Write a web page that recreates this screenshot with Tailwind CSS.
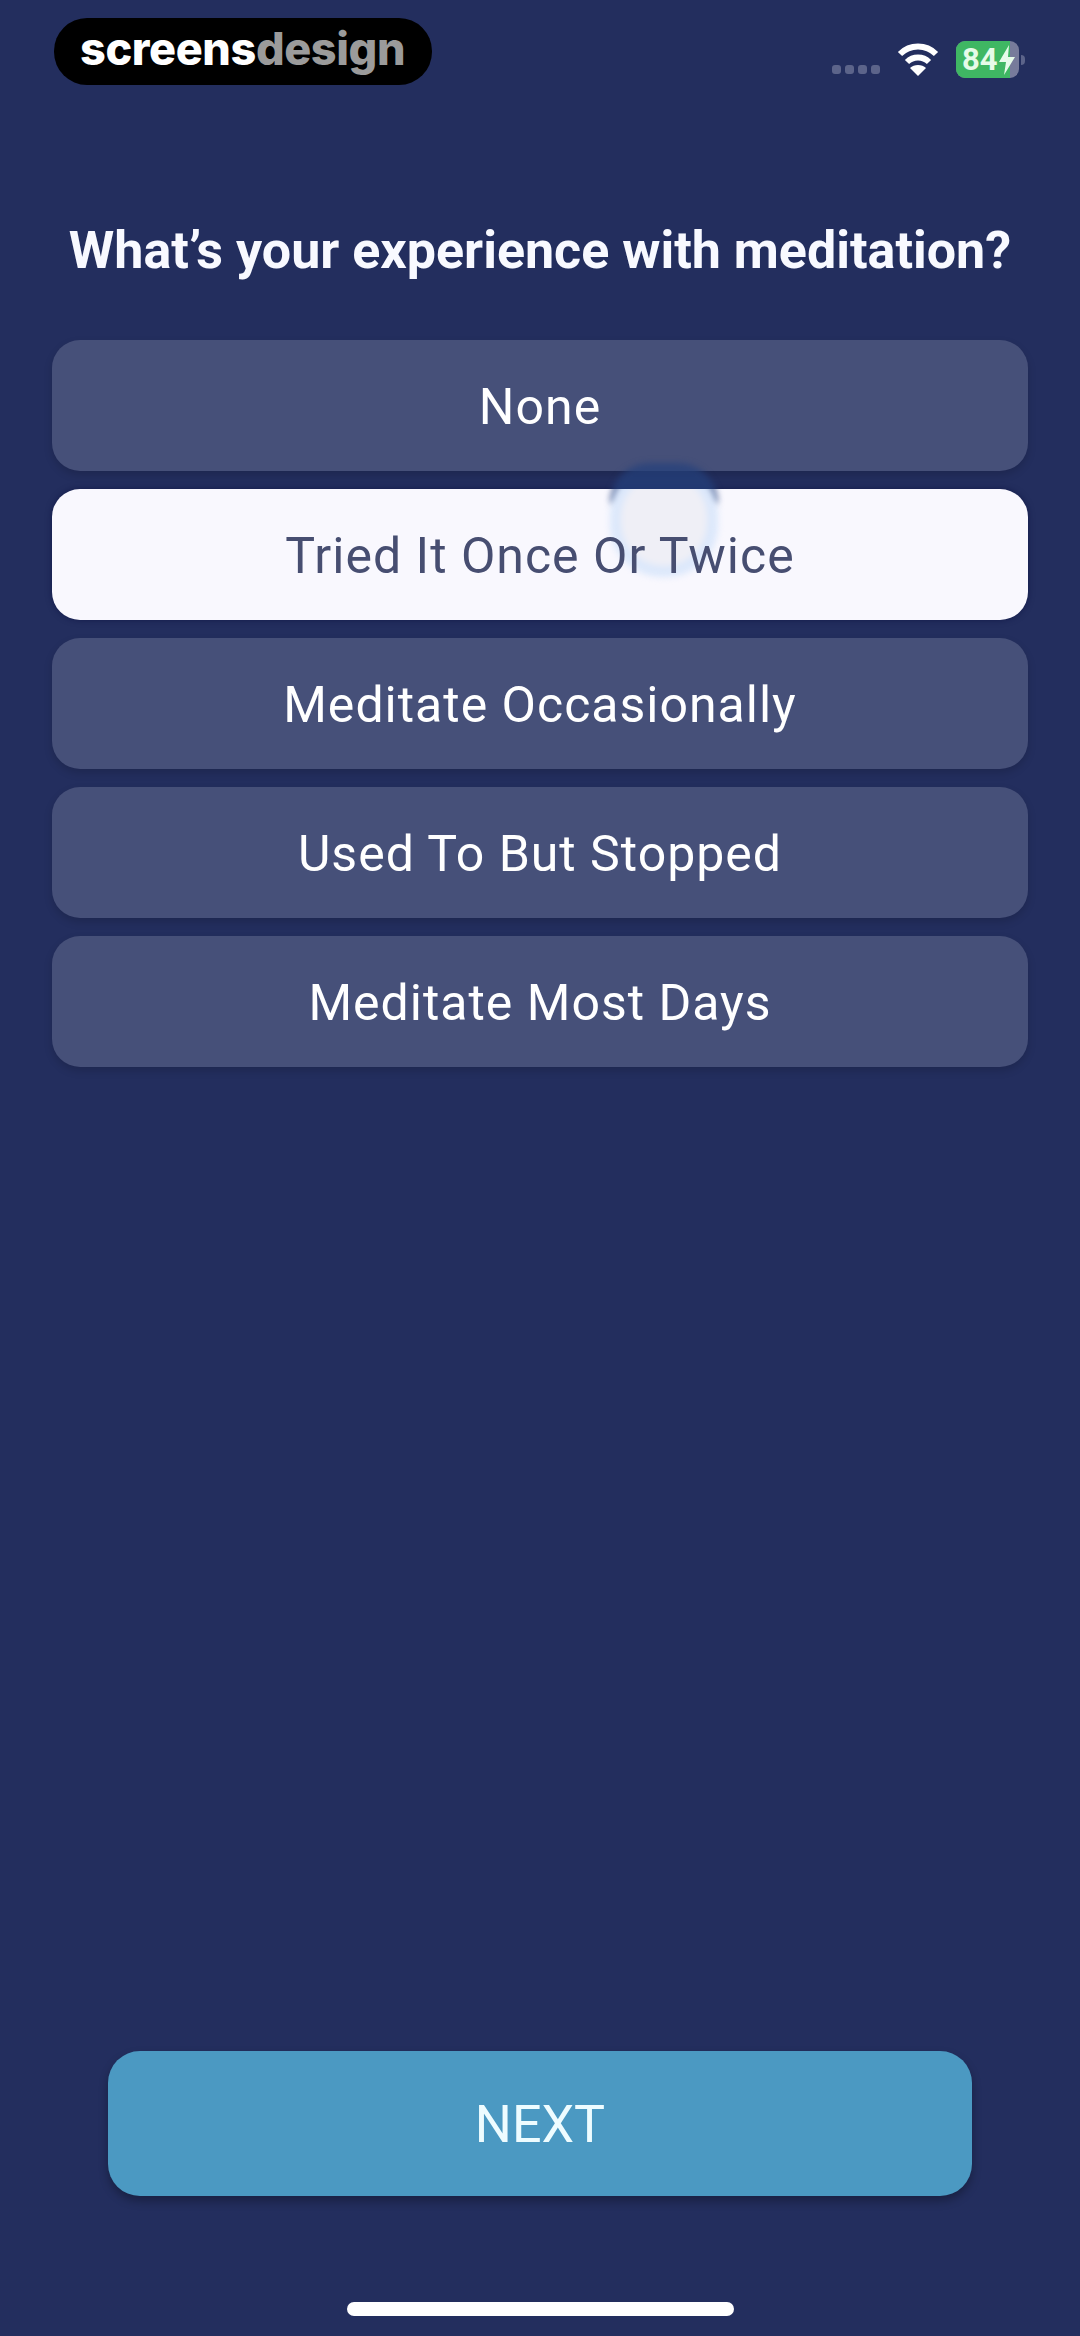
<!DOCTYPE html>
<html><head><meta charset="utf-8"><script src="https://cdn.jsdelivr.net/npm/@tailwindcss/browser@4"></script></head>
<body class="m-0">
<div class="w-[1080px] h-[2336px] bg-[#232e5e] flex flex-col overflow-hidden font-['Roboto',sans-serif]">
  <div class="h-[85px] mt-[18px] pl-[54px] pr-[55px] flex items-start justify-between shrink-0">
    <div class="w-[378px] h-[67px] bg-black rounded-[33px] flex items-center pl-[26px] font-['Inter',sans-serif] font-extrabold text-[45px] leading-none tracking-[-0.4px] pb-[7px]">
      <span class="text-white">screens</span><span class="text-[#9b9b9b]">design</span>
    </div>
    <div class="flex items-center mt-[23px] h-[37px] relative">
      <div class="flex gap-[4px] mt-[20px] mr-[17px]">
        <span class="w-[9px] h-[9px] rounded-[3px] bg-[#5c648a]"></span><span class="w-[9px] h-[9px] rounded-[3px] bg-[#5c648a]"></span><span class="w-[9px] h-[9px] rounded-[3px] bg-[#5c648a]"></span><span class="w-[9px] h-[9px] rounded-[3px] bg-[#5c648a]"></span>
      </div>
      <svg width="42" height="33" viewBox="0 0 42 33" class="mr-[17px]" fill="none" stroke="#fff" stroke-width="6"><path d="M3 11C13 1 29 1 39 11"/><path d="M10 19C16 13 26 13 32 19"/><path d="M13 25L21 33L29 25C25 21 17 21 13 25Z" fill="#fff" stroke="none"/></svg>
      <div class="w-[63px] h-[37px] rounded-[9px] bg-[#777b9b] overflow-hidden relative">
        <div class="w-[54px] h-[37px] bg-[#3fb763] flex items-center pl-[6px] text-[#e6fbe9] font-bold text-[31px] leading-none">84</div>
        <svg width="16" height="30" viewBox="0 0 16 30" class="absolute left-[43px] top-[4px]"><path d="M10 0L0 17H7L5 30L16 12H9Z" fill="#e6fbe9"/></svg>
      </div>
      <div class="w-[4px] h-[10px] ml-[2px] bg-[#5c648a] rounded-r-full"></div>
    </div>
  </div>
  <h1 class="mt-[116px] text-center text-[#f8f9ff] font-bold text-[52px] leading-[64px] shrink-0">What’s your experience with meditation?</h1>
  <div class="mt-[57px] mx-[52px] flex flex-col gap-[18px]">
    <div class="h-[131px] pt-[4px] rounded-[28px] bg-[#465079] shadow-[0_4px_8px_rgba(0,0,0,0.15)] flex items-center justify-center text-white text-[50px] tracking-[1px]">None</div>
    <div class="relative h-[131px] pt-[4px] rounded-[28px] bg-[#f9f8fe] shadow-[0_0_6px_rgba(10,15,60,0.6)] flex items-center justify-center text-[#474e71] text-[50px] tracking-[1px]">
      <div class="absolute left-[558px] top-[-26px] w-[108px] h-[40px] rounded-t-[52px] bg-[#24407c]/70 blur-[3px] -z-0"></div>
      <div class="absolute inset-0 rounded-[28px] overflow-hidden">
        <div class="absolute left-[558px] top-[-26px] w-[108px] h-[114px] rounded-[52px] bg-[#dce8fb] blur-[3px] flex items-center justify-center"><div class="w-[86px] h-[92px] rounded-[44px] bg-[#efeff6]"></div></div>
      </div>
      <span class="relative">Tried It Once Or Twice</span>
    </div>
    <div class="h-[131px] pt-[4px] rounded-[28px] bg-[#465079] shadow-[0_4px_8px_rgba(0,0,0,0.15)] flex items-center justify-center text-white text-[50px] tracking-[1px]">Meditate Occasionally</div>
    <div class="h-[131px] pt-[4px] rounded-[28px] bg-[#465079] shadow-[0_4px_8px_rgba(0,0,0,0.15)] flex items-center justify-center text-white text-[50px] tracking-[1px]">Used To But Stopped</div>
    <div class="h-[131px] pt-[4px] rounded-[28px] bg-[#465079] shadow-[0_4px_8px_rgba(0,0,0,0.15)] flex items-center justify-center text-white text-[50px] tracking-[1px]">Meditate Most Days</div>
  </div>
  <div class="mt-auto mx-[108px] h-[145px] pt-[3px] rounded-[32px] bg-[#4b99c2] shadow-[0_5px_10px_rgba(0,0,0,0.3)] flex items-center justify-center text-[#eefcff] text-[52px]">NEXT</div>
  <div class="mt-[106px] mb-[20px] mx-auto w-[387px] h-[14px] rounded-full bg-white"></div>
</div>
</body></html>
